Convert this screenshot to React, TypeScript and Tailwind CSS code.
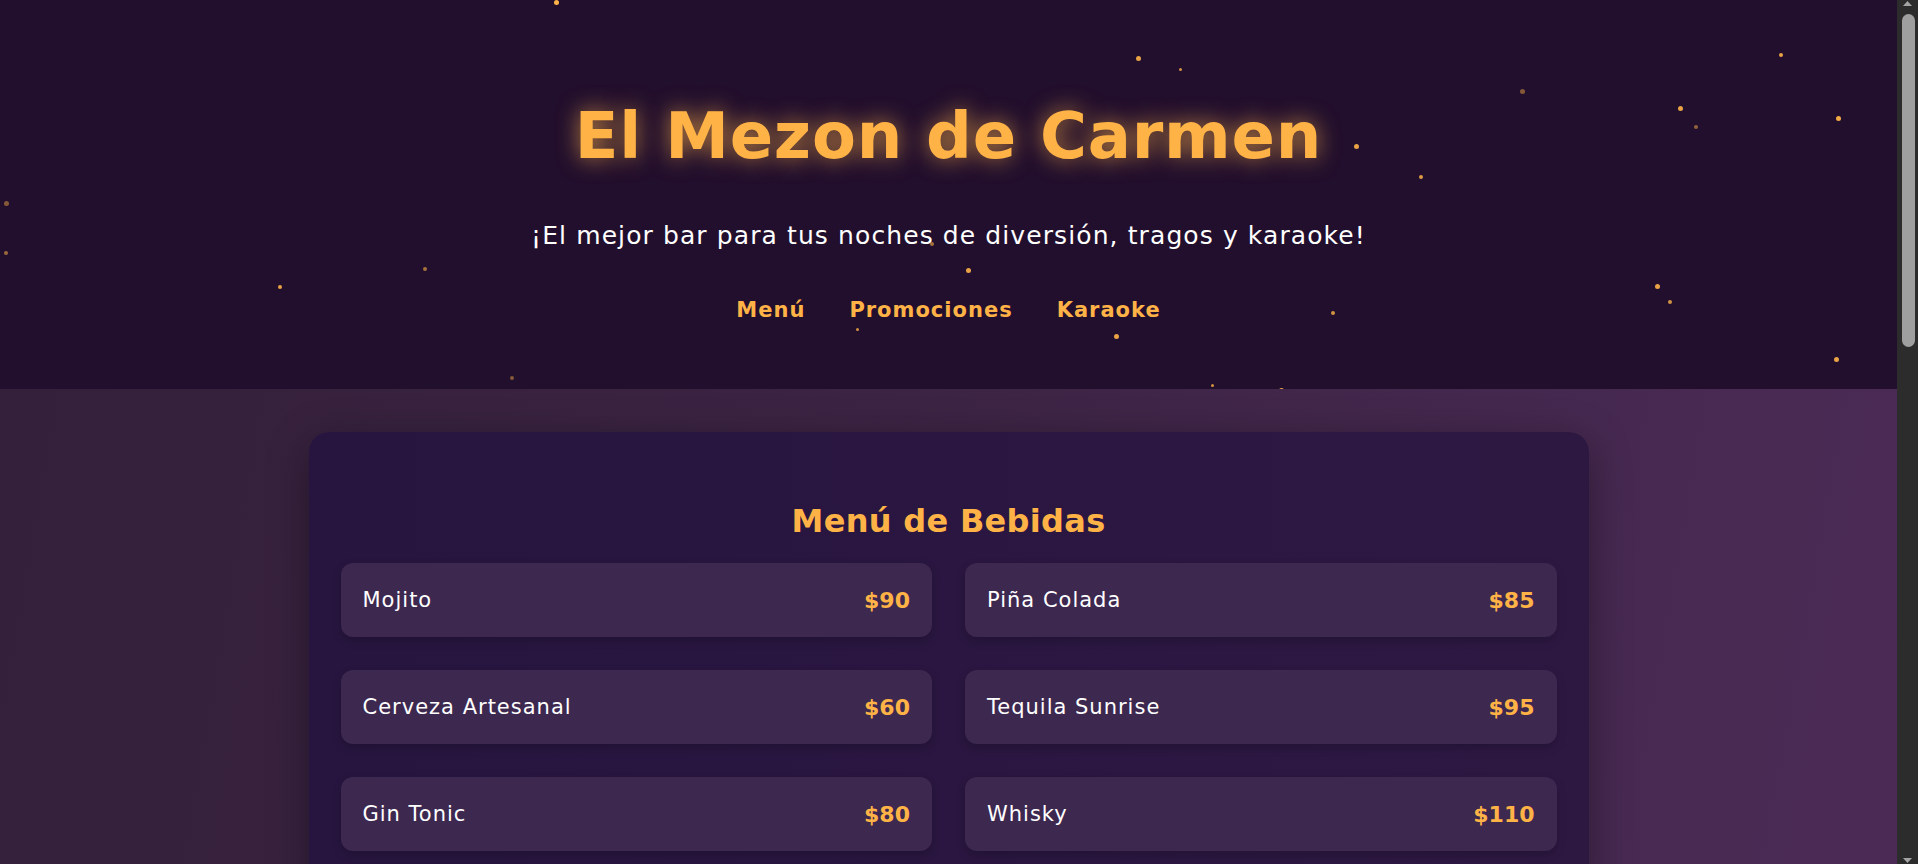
import React from "react";

const dots: [number, number, number, number][] = [
  [554, 0, 5, 1],
  [1136, 56, 5, 0.9],
  [1179, 68, 3, 0.8],
  [1779, 53, 4, 0.9],
  [1520, 89, 5, 0.45],
  [1678, 106, 5, 0.9],
  [1694, 125, 4, 0.5],
  [1836, 116, 5, 0.95],
  [1354, 144, 5, 0.9],
  [1419, 175, 4, 0.85],
  [4, 201, 5, 0.45],
  [4, 251, 4, 0.55],
  [423, 267, 4, 0.6],
  [278, 285, 4, 0.9],
  [930, 242, 4, 0.6],
  [966, 268, 5, 0.9],
  [1655, 284, 5, 0.9],
  [1668, 300, 4, 0.8],
  [1331, 311, 4, 0.8],
  [856, 328, 3, 0.8],
  [1114, 334, 5, 0.9],
  [1834, 357, 5, 0.9],
  [510, 376, 4, 0.45],
  [1211, 384, 3, 0.8],
  [1279, 388, 5, 0.9],
];

const drinks: [string, string][] = [
  ["Mojito", "$90"],
  ["Piña Colada", "$85"],
  ["Cerveza Artesanal", "$60"],
  ["Tequila Sunrise", "$95"],
  ["Gin Tonic", "$80"],
  ["Whisky", "$110"],
  ["Margarita", "$90"],
  ["Vodka Tonic", "$85"],
];

const promos: [string, string][] = [
  ["Martes 2x1", "En cervezas artesanales toda la noche"],
  ["Jueves de Karaoke", "Cocteles a mitad de precio"],
  ["Viernes Latino", "Shots de tequila a $40"],
  ["Cumpleañeros", "Botella de cortesía con reservación"],
];

export default function App() {
  return (
    <div
      className="flex h-screen overflow-hidden text-white"
      style={{ fontFamily: "'DejaVu Sans', Inter, sans-serif" }}
    >
      <div className="flex-1 min-w-0 overflow-hidden">
        <header className="relative h-[389px] overflow-hidden bg-[#220f2d] flex flex-col items-center pt-[104px]">
          {dots.map(([x, y, s, o], i) => (
            <span
              key={i}
              className="absolute rounded-full bg-[#ffb347]"
              style={{ left: x, top: y, width: s, height: s, opacity: o }}
            />
          ))}
          <h1 className="relative text-[64px] leading-[64px] font-bold tracking-[0.8px] text-[#ffb347] [text-shadow:0_0_22px_rgba(255,179,71,0.7)]">
            El Mezon de Carmen
          </h1>
          <p className="relative mt-[52px] text-[25px] leading-[32px] tracking-[1.1px] text-white">
            ¡El mejor bar para tus noches de diversión, tragos y karaoke!
          </p>
          <nav className="relative mt-[44px] flex gap-[44px] text-[21px] leading-[28px] font-bold tracking-[1px] text-[#ffb347]">
            <a>Menú</a>
            <a>Promociones</a>
            <a>Karaoke</a>
          </nav>
        </header>

        <main className="bg-[linear-gradient(100deg,#34203a_0%,#3c2444_45%,#4d2c58_100%)] px-4 pt-[43px] pb-[60px] flex flex-col items-center gap-[48px]">
          <section className="w-full max-w-[1280px] rounded-[20px] bg-[linear-gradient(90deg,#27153f,#2d1842)] shadow-[0_10px_40px_rgba(0,0,0,0.35)] px-8 pt-[69px] pb-[40px]">
            <h2 className="text-center text-[32px] leading-[40px] font-bold tracking-[0.3px] text-[#ffb347] mb-[22px]">
              Menú de Bebidas
            </h2>
            <div className="grid grid-cols-2 gap-x-[33px] gap-y-[33px]">
              {drinks.map(([name, price]) => (
                <div
                  key={name}
                  className="h-[74px] rounded-[12px] bg-[#3d2850] shadow-[0_4px_10px_rgba(0,0,0,0.18)] flex items-center justify-between px-[22px]"
                >
                  <span className="mt-[2px] text-[21px] tracking-[1px] text-white">{name}</span>
                  <span className="text-[22px] font-bold text-[#ffb347]">{price}</span>
                </div>
              ))}
            </div>
          </section>

          <section className="w-full max-w-[1280px] rounded-[20px] bg-[linear-gradient(90deg,#27153f,#2d1842)] shadow-[0_10px_40px_rgba(0,0,0,0.35)] px-8 py-[48px]">
            <h2 className="text-center text-[32px] leading-[40px] font-bold tracking-[0.3px] text-[#ffb347] mb-[22px]">
              Promociones
            </h2>
            <div className="grid grid-cols-2 gap-[33px]">
              {promos.map(([t, d]) => (
                <div key={t} className="rounded-[12px] bg-[#3d2850] p-[22px]">
                  <div className="text-[22px] font-bold text-[#ffb347]">{t}</div>
                  <div className="mt-2 text-[18px] text-white">{d}</div>
                </div>
              ))}
            </div>
          </section>
        </main>
      </div>

      <div className="w-[21px] shrink-0 bg-[#2c2c2c] flex flex-col items-center">
        <svg width="9" height="5" viewBox="0 0 9 5" className="mt-[1px]">
          <path d="M0 5 L4.5 0 L9 5 Z" fill="#a3a3a3" />
        </svg>
        <div className="mt-[8px] w-[13px] h-[333px] rounded-full bg-[#9f9f9f] ml-[1px]" />
        <div className="flex-1" />
        <svg width="9" height="5" viewBox="0 0 9 5" className="mb-[1px]">
          <path d="M0 0 L9 0 L4.5 5 Z" fill="#a3a3a3" />
        </svg>
      </div>
    </div>
  );
}
